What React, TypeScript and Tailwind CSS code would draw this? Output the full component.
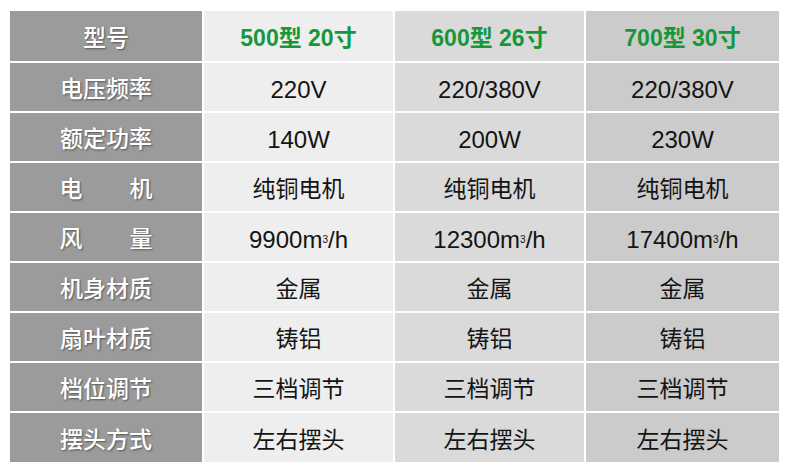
const rows: { label: string; spread?: boolean; latin?: boolean; values: React.ReactNode[] }[] = [
  { label: '电压频率', latin: true, values: ['220V', '220/380V', '220/380V'] },
  { label: '额定功率', latin: true, values: ['140W', '200W', '230W'] },
  { label: '电机', spread: true, values: ['纯铜电机', '纯铜电机', '纯铜电机'] },
  {
    label: '风量',
    spread: true,
    latin: true,
    values: ['9900', '12300', '17400'].map((n) => (
      <span key={n}>
        {n}m<sup className="text-[10px]">3</sup>/h
      </span>
    )),
  },
  { label: '机身材质', values: ['金属', '金属', '金属'] },
  { label: '扇叶材质', values: ['铸铝', '铸铝', '铸铝'] },
  { label: '档位调节', values: ['三档调节', '三档调节', '三档调节'] },
  { label: '摆头方式', values: ['左右摆头', '左右摆头', '左右摆头'] },
]

const colBg = ['bg-[#eeeeee]', 'bg-[#dadada]', 'bg-[#cbcbcb]']
const models = ['500型 20寸', '600型 26寸', '700型 30寸']

function Label({ text, spread }: { text: string; spread?: boolean }) {
  return (
    <div className="flex items-center justify-center bg-[#9b9b9b] pt-[5px] text-[23px] font-medium text-white [text-shadow:1px_1px_2px_rgba(0,0,0,0.45)]">
      {spread ? (
        <div className="flex w-[93px] justify-between">
          {text.split('').map((c) => (
            <span key={c}>{c}</span>
          ))}
        </div>
      ) : (
        text
      )}
    </div>
  )
}

export default function App() {
  return (
    <div
      className="h-[473px] w-[790px] bg-white pl-[10px] pt-[11px]"
      style={{ fontFamily: '"Liberation Sans", "Noto Sans CJK SC", sans-serif' }}
    >
      <div className="grid grid-cols-[192px_189px_189px_193px] grid-rows-[50px_repeat(7,48px)_49px] gap-[2px]">
        <Label text="型号" />
        {models.map((m, i) => (
          <div
            key={m}
            className={`flex items-center justify-center pt-[5px] text-[23px] font-bold text-[#16973a] ${colBg[i]}`}
          >
            {m}
          </div>
        ))}
        {rows.map((r) => (
          <div key={r.label} className="contents">
            <Label text={r.label} spread={r.spread} />
            {r.values.map((v, i) => (
              <div
                key={i}
                className={`flex items-center justify-center pt-[5px] text-[#141414] ${r.latin ? 'text-[24px]' : 'text-[23px]'} ${colBg[i]}`}
              >
                {v}
              </div>
            ))}
          </div>
        ))}
      </div>
    </div>
  )
}
